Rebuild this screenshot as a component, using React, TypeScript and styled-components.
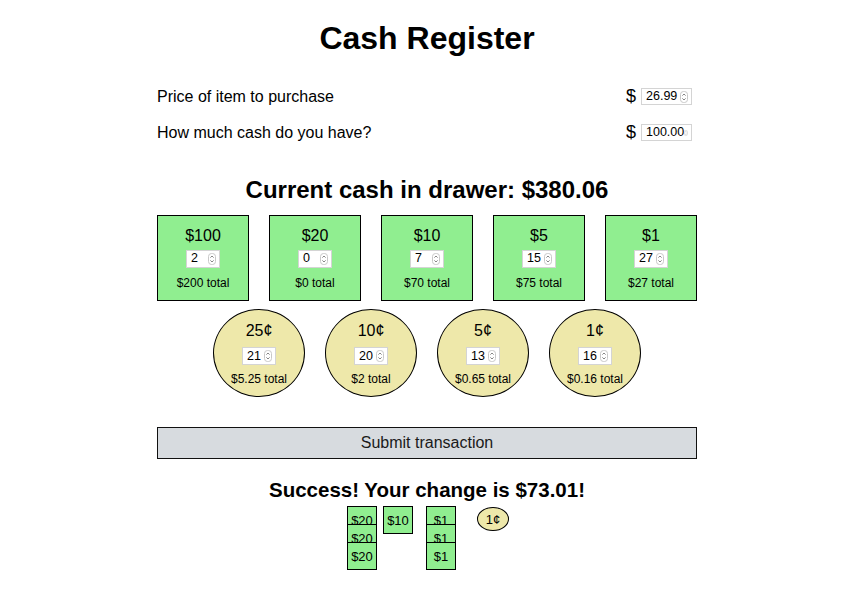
import React from "react";
import styled, { createGlobalStyle } from "styled-components";

const Global = createGlobalStyle`
  html, body { margin: 0; padding: 0; background: #fff; }
  body { font-family: "Liberation Sans", Arial, sans-serif; color: #000; padding-left: 4px; }
`;

const Page = styled.div`
  width: 540px;
  margin: 0 auto;
  padding-top: 20px;
  display: flex;
  flex-direction: column;
  align-items: stretch;
`;

const Title = styled.h1`
  margin: 0 0 21px;
  font-size: 32px;
  line-height: 37px;
  font-weight: bold;
  text-align: center;
`;

const FieldRow = styled.div`
  height: 35px;
  display: flex;
  align-items: center;
  justify-content: space-between;
  font-size: 16px;
  padding-top: 1px;
`;

const FieldRight = styled.div`
  display: flex;
  align-items: center;
  gap: 5px;
  padding-right: 5px;
  font-size: 18px;
`;

const Heading = styled.h2`
  margin: 26px 0 11px;
  font-size: 24px;
  line-height: 28px;
  font-weight: bold;
  text-align: center;
`;

const DenomRow = styled.div<{ $mt?: number }>`
  display: flex;
  justify-content: center;
  gap: 20px;
  margin-top: ${(p) => p.$mt ?? 0}px;
`;

const Denom = styled.div<{ $coin?: boolean }>`
  box-sizing: border-box;
  width: 92px;
  height: ${(p) => (p.$coin ? 88 : 86)}px;
  border: 1px solid #000;
  border-radius: ${(p) => (p.$coin ? "50%" : "0")};
  background: ${(p) => (p.$coin ? "#eee8aa" : "#90ee90")};
  display: flex;
  flex-direction: column;
  align-items: center;
  justify-content: center;
  padding-top: ${(p) => (p.$coin ? 2 : 0)}px;
`;

const DenomName = styled.div`
  font-size: 16px;
  line-height: 18px;
`;

const DenomTotal = styled.div<{ $coin?: boolean }>`
  font-size: 12px;
  line-height: 14px;
  margin-top: ${(p) => (p.$coin ? 7 : 8)}px;
`;

const SpinBox = styled.div<{ $w: number; $h: number; $mt?: number }>`
  box-sizing: border-box;
  width: ${(p) => p.$w}px;
  height: ${(p) => p.$h}px;
  margin-top: ${(p) => p.$mt ?? 0}px;
  background: #fff;
  border: 1px solid #d4d4d4;
  display: flex;
  align-items: center;
  justify-content: space-between;
  padding: 0 3px 0 4px;
  font-size: 12.5px;
  color: #000;
`;

const SpinValue = styled.span`
  line-height: 1;
`;

const Spinner = () => (
  <svg width="8" height="12" viewBox="0 0 8 12">
    <rect x="0.5" y="0.5" width="7" height="11" rx="3" fill="#fff" stroke="#c8c8c8" />
    <path d="M2.4 4.6 L4 3 L5.6 4.6" fill="none" stroke="#777" strokeWidth="0.9" />
    <path d="M2.4 7.4 L4 9 L5.6 7.4" fill="none" stroke="#777" strokeWidth="0.9" />
  </svg>
);

const NumberInput = ({ value, w, h, mt }: { value: string; w: number; h: number; mt?: number }) => (
  <SpinBox $w={w} $h={h} $mt={mt}>
    <SpinValue>{value}</SpinValue>
    <Spinner />
  </SpinBox>
);

const SubmitButton = styled.button`
  margin-top: 30px;
  height: 32px;
  width: 100%;
  box-sizing: border-box;
  border: 1px solid #111;
  background: #d7dbdf;
  font-family: "Liberation Sans", Arial, sans-serif;
  font-size: 16px;
  color: #1a1a1a;
  padding: 0;
`;

const Success = styled.h3`
  margin: 19px 0 5px;
  font-size: 20.5px;
  line-height: 23px;
  font-weight: bold;
  text-align: center;
`;

const ChangeRow = styled.div`
  display: flex;
  justify-content: center;
  align-items: flex-start;
  gap: 6px;
  padding-right: 4px;
`;

const ChangeColumn = styled.div<{ $shift?: number }>`
  display: flex;
  flex-direction: column;
  margin-left: ${(p) => p.$shift ?? 0}px;
`;

const ChangeBill = styled.div`
  box-sizing: border-box;
  width: 30px;
  height: 28px;
  border: 1px solid #000;
  background: #90ee90;
  font-size: 13px;
  display: flex;
  align-items: center;
  justify-content: center;
  & + & {
    margin-top: -10px;
  }
`;

const ChangeCoin = styled.div`
  box-sizing: border-box;
  width: 32px;
  height: 24px;
  margin-top: 1px;
  border: 1px solid #000;
  border-radius: 50%;
  background: #eee8aa;
  font-size: 13px;
  display: flex;
  align-items: center;
  justify-content: center;
`;

const bills = [
  { name: "$100", count: "2", total: "$200 total" },
  { name: "$20", count: "0", total: "$0 total" },
  { name: "$10", count: "7", total: "$70 total" },
  { name: "$5", count: "15", total: "$75 total" },
  { name: "$1", count: "27", total: "$27 total" },
];

const coins = [
  { name: "25¢", count: "21", total: "$5.25 total" },
  { name: "10¢", count: "20", total: "$2 total" },
  { name: "5¢", count: "13", total: "$0.65 total" },
  { name: "1¢", count: "16", total: "$0.16 total" },
];

const change: { label: string; count: number; coin?: boolean; shift?: number }[] = [
  { label: "$100", count: 0 },
  { label: "$20", count: 3 },
  { label: "$10", count: 1 },
  { label: "$5", count: 0, shift: 1 },
  { label: "$1", count: 3 },
  { label: "25¢", count: 0, coin: true },
  { label: "10¢", count: 0, coin: true },
  { label: "5¢", count: 0, coin: true },
  { label: "1¢", count: 1, coin: true, shift: -3 },
];

export default function App() {
  return (
    <>
      <Global />
      <Page>
        <Title>Cash Register</Title>
        <FieldRow>
          <span>Price of item to purchase</span>
          <FieldRight>
            <span>$</span>
            <NumberInput value="26.99" w={51} h={17} />
          </FieldRight>
        </FieldRow>
        <FieldRow>
          <span>How much cash do you have?</span>
          <FieldRight>
            <span>$</span>
            <NumberInput value="100.00" w={51} h={17} />
          </FieldRight>
        </FieldRow>
        <Heading>Current cash in drawer: $380.06</Heading>
        <DenomRow>
          {bills.map((b) => (
            <Denom key={b.name}>
              <DenomName>{b.name}</DenomName>
              <NumberInput value={b.count} w={34} h={18} mt={5} />
              <DenomTotal>{b.total}</DenomTotal>
            </Denom>
          ))}
        </DenomRow>
        <DenomRow $mt={8}>
          {coins.map((c) => (
            <Denom key={c.name} $coin>
              <DenomName>{c.name}</DenomName>
              <NumberInput value={c.count} w={34} h={18} mt={7} />
              <DenomTotal $coin>{c.total}</DenomTotal>
            </Denom>
          ))}
        </DenomRow>
        <SubmitButton>Submit transaction</SubmitButton>
        <Success>Success! Your change is $73.01!</Success>
        <ChangeRow>
          {change.map((c) => (
            <ChangeColumn key={c.label} $shift={c.shift}>
              {Array.from({ length: c.count }).map((_, i) =>
                c.coin ? (
                  <ChangeCoin key={i}>{c.label}</ChangeCoin>
                ) : (
                  <ChangeBill key={i}>{c.label}</ChangeBill>
                )
              )}
            </ChangeColumn>
          ))}
        </ChangeRow>
      </Page>
    </>
  );
}
